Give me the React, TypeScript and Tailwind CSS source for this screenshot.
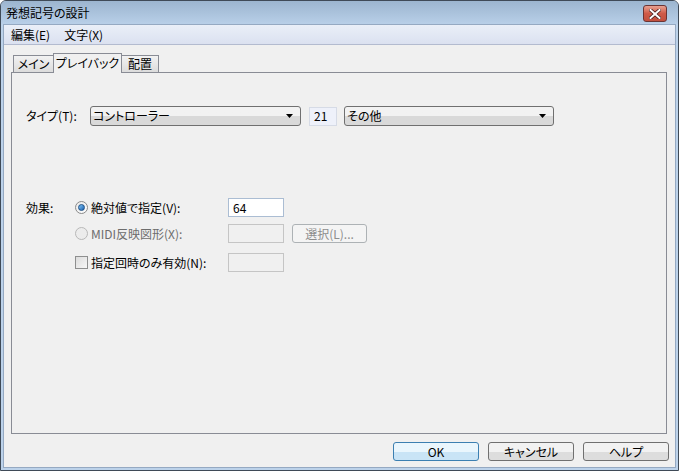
import React, { useState } from 'react';

const font = { fontFamily: '"Noto Sans CJK JP", "Noto Sans", sans-serif' };

const Arrow: React.FC = () => (
  <svg width="8" height="5" viewBox="0 0 8 5" className="shrink-0">
    <path d="M0 0 H7 L3.5 4 Z" fill="#000" />
  </svg>
);

const Select: React.FC<{ value: string; width: string }> = ({ value, width }) => (
  <div
    className={`${width} h-[20px] flex items-center justify-between pl-[2px] pr-[6px] border border-[#707070] rounded-[3px] bg-gradient-to-b from-[#f2f2f2] from-50% to-[#d9d9d9] to-50% text-[12px] text-black`}
  >
    <span className="leading-none whitespace-nowrap">{value}</span>
    <Arrow />
  </div>
);

const Radio: React.FC<{ checked?: boolean; disabled?: boolean }> = ({ checked, disabled }) => (
  <span
    className={`w-[13px] h-[13px] rounded-full border flex items-center justify-center shrink-0 ${
      disabled ? 'border-[#b8b8b8] bg-[#ececec]' : 'border-[#8a8a8a] bg-gradient-to-br from-[#e8e8e8] to-[#ffffff]'
    }`}
  >
    {checked && <span className="w-[7px] h-[7px] rounded-full bg-gradient-to-br from-[#7ec3f5] to-[#1a62b0] border border-[#1c4f85]" />}
  </span>
);

const Button: React.FC<{ label: string; primary?: boolean; disabled?: boolean; width?: string }> = ({
  label,
  primary,
  disabled,
  width = 'w-[86px]',
}) => (
  <div
    className={`${width} h-[19px] flex items-center justify-center rounded-[3px] border text-[12px] leading-none whitespace-nowrap ${
      disabled
        ? 'border-[#adb2b5] bg-[#f4f4f4] text-[#8d8d8d]'
        : primary
        ? 'border-[#3c7fb1] bg-gradient-to-b from-[#eaf6fd] from-50% to-[#c9e4f6] to-50% text-black'
        : 'border-[#707070] bg-gradient-to-b from-[#f2f2f2] from-50% to-[#dddddd] to-50% text-black'
    }`}
  >
    {label}
  </div>
);

const Field: React.FC<{ value?: string; disabled?: boolean }> = ({ value, disabled }) => (
  <div
    className={`w-[56px] h-[19px] flex items-center px-[4px] text-[12px] border ${
      disabled ? 'border-[#c5c5c5] bg-[#f0f0f0]' : 'border-[#abbdd3] bg-white'
    }`}
  >
    {value}
  </div>
);

export default function App() {
  const [tab] = useState('playback');

  return (
    <div style={font} className="w-[679px] h-[471px] bg-[#bcd2ea] border border-[#3f4a57] rounded-t-[6px] flex flex-col overflow-hidden [font-feature-settings:'palt']">
      {/* Title bar */}
      <div className="h-[23px] shrink-0 flex items-center justify-between pl-[5px] pr-[11px] bg-gradient-to-b from-[#9cb5cf] to-[#b8cfe8]">
        <span className="text-[12px] text-black leading-none">発想記号の設計</span>
        <div className="w-[24px] h-[17px] mt-[2px] rounded-[3px] border border-[#6b3434] bg-gradient-to-b from-[#e7a091] via-[#cf5a48] to-[#c2503f] flex items-center justify-center">
          <svg width="12" height="10" viewBox="0 0 12 10">
            <path d="M1.5 1 L10.5 9 M10.5 1 L1.5 9" stroke="#4a2020" strokeWidth="3.6" strokeLinecap="square" />
            <path d="M1.5 1 L10.5 9 M10.5 1 L1.5 9" stroke="#ffffff" strokeWidth="2" strokeLinecap="square" />
          </svg>
        </div>
      </div>

      {/* Client area */}
      <div className="flex-1 flex flex-col mx-[2px] mb-[2px] border border-[#95a9c2] bg-[#f0f0f0]">
        {/* Menu bar */}
        <div className="h-[20px] shrink-0 flex items-center gap-[14px] pl-[7px] text-[12px] text-black bg-gradient-to-b from-[#eaeff8] to-[#dbe1f0] border-b border-[#b3bbcf]">
          <span>編集(E)</span>
          <span>文字(X)</span>
        </div>

        {/* Body */}
        <div className="flex-1 flex flex-col pt-[7px] pl-[7px] pr-[8px]">
          {/* Tabs */}
          <div className="flex items-end h-[20px] pl-[2px] text-[12px] text-black whitespace-nowrap">
            <div className="w-[41px] h-[17px] flex items-center justify-center border border-[#898c95] border-b-0 bg-gradient-to-b from-[#f2f2f2] to-[#dcdcdc]">メイン</div>
            <div className={`w-[69px] h-[20px] flex items-center justify-center border border-[#898c95] border-b-0 -mx-px mb-[-1px] pb-px relative z-10 ${tab === 'playback' ? 'bg-[#f0f0f0]' : ''}`}>
              プレイバック
            </div>
            <div className="w-[38px] h-[17px] flex items-center justify-center border border-[#898c95] border-b-0 bg-gradient-to-b from-[#f2f2f2] to-[#dcdcdc]">配置</div>
          </div>

          {/* Panel */}
          <div className="h-[362px] border border-[#898c95] flex flex-col pt-[33px] pl-[14px] text-[12px] text-black">
            <div className="flex items-center h-[20px]">
              <span className="w-[64px]">タイプ(T):</span>
              <Select value="コントローラー" width="w-[211px]" />
              <div className="ml-[8px] w-[28px] h-[19px] flex items-center px-[4px] border border-[#d6dbe6] bg-[#eef1fa]">21</div>
              <div className="ml-[7px]">
                <Select value="その他" width="w-[210px]" />
              </div>
            </div>

            <div className="flex mt-[72px]">
              <span className="w-[49px] pt-[1px]">効果:</span>
              <div className="flex flex-col gap-[7px]">
                <div className="flex items-center h-[19px]">
                  <Radio checked />
                  <span className="ml-[3px] w-[137px]">絶対値で指定(V):</span>
                  <Field value="64" />
                </div>
                <div className="flex items-center h-[19px]">
                  <Radio disabled />
                  <span className="ml-[3px] w-[137px] text-[#6d6d6d]">MIDI反映図形(X):</span>
                  <Field disabled />
                  <div className="ml-[8px]">
                    <Button label="選択(L)..." disabled width="w-[75px]" />
                  </div>
                </div>
                <div className="flex items-center h-[19px] mt-[3px]">
                  <span className="w-[13px] h-[13px] border border-[#8e8f8f] bg-gradient-to-br from-[#dcdcdc] to-[#f7f7f7] shrink-0" />
                  <span className="ml-[3px] w-[137px]">指定回時のみ有効(N):</span>
                  <Field disabled />
                </div>
              </div>
            </div>
          </div>

          {/* Buttons */}
          <div className="flex justify-end gap-[9px] mt-[8px] mr-[-2px]">
            <Button label="OK" primary />
            <Button label="キャンセル" />
            <Button label="ヘルプ" />
          </div>
        </div>
      </div>
    </div>
  );
}
